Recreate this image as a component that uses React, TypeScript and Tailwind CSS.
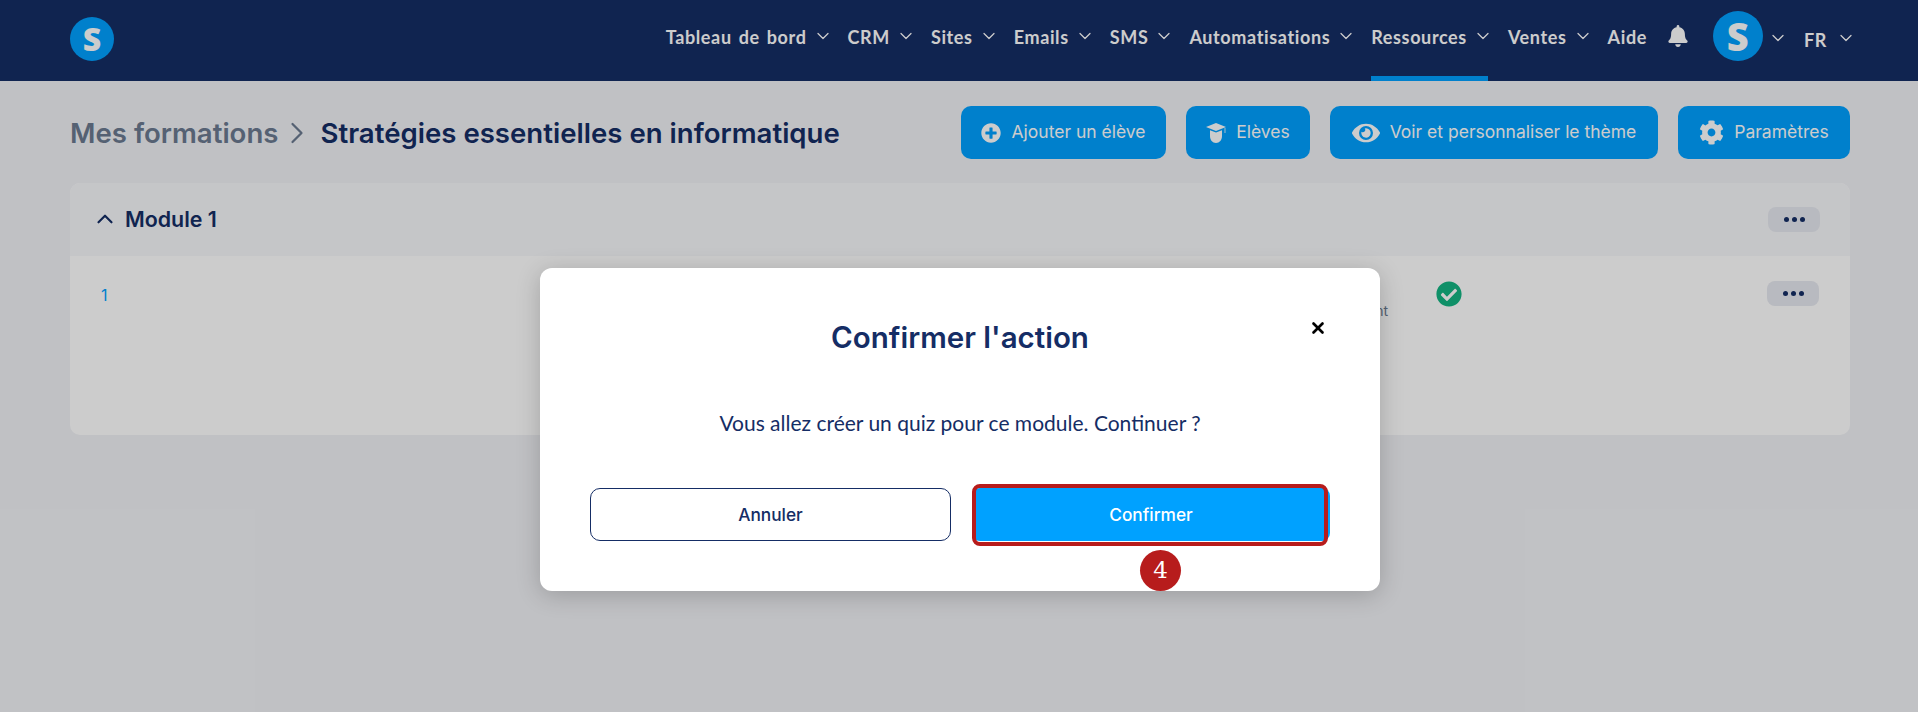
import { ChevronDown, ChevronRight, ChevronUp, X } from "lucide-react";
import { FaBell, FaCheckCircle, FaCog, FaEye, FaPlusCircle } from "react-icons/fa";

const navItems = [
  { label: "Tableau de bord", caret: true },
  { label: "CRM", caret: true },
  { label: "Sites", caret: true },
  { label: "Emails", caret: true },
  { label: "SMS", caret: true },
  { label: "Automatisations", caret: true },
  { label: "Ressources", caret: true, active: true },
  { label: "Ventes", caret: true },
  { label: "Aide", caret: false },
];

const GradCap = () => (
  <svg viewBox="0 0 20 24" className="w-5 h-6" fill="currentColor">
    <path d="M10 2 L20 6 L10 10 L0 6 Z" />
    <path d="M18.6 7 h0.8 v5 h-0.8 z" />
    <path d="M4 9.2 L10 11.6 L16 9.2 V15 C16 19 13.5 22 10 22 C6.5 22 4 19 4 15 Z" />
  </svg>
);

const actions = [
  { label: "Ajouter un élève", icon: <FaPlusCircle className="w-5 h-5" />, width: "w-[205px]" },
  { label: "Elèves", icon: <GradCap />, width: "w-[124px]" },
  { label: "Voir et personnaliser le thème", icon: <FaEye className="w-7 h-7" />, width: "w-[328px]" },
  { label: "Paramètres", icon: <FaCog className="w-[25px] h-[25px]" />, width: "w-[172px]" },
];

const Logo = ({ big }: { big?: boolean }) => (
  <div
    className={`rounded-full bg-[#00a1ff] text-white flex items-center justify-center font-extrabold [font-family:'Open_Sans',sans-serif] ${
      big ? "w-[50px] h-[50px] text-[38px]" : "w-11 h-11 text-[32px]"
    }`}
  >
    S
  </div>
);

const MoreButton = () => (
  <div className="w-[52px] h-[25px] rounded-[8px] bg-[#e7e9f0] flex items-center justify-center gap-[3px]">
    <span className="w-[5px] h-[5px] rounded-full bg-[#152d65]" />
    <span className="w-[5px] h-[5px] rounded-full bg-[#152d65]" />
    <span className="w-[5px] h-[5px] rounded-full bg-[#152d65]" />
  </div>
);

export default function App() {
  return (
    <div className="relative w-full h-[712px] overflow-hidden bg-[#f1f2f6] [font-family:Inter,sans-serif]">
      {/* Top bar */}
      <header className="h-[81px] bg-[#152d65] pl-[70px] pr-[67px] flex items-center justify-between">
        <div className="-mt-[4px]">
          <Logo />
        </div>
        <nav className="flex items-center h-full gap-5 text-white font-bold text-[18px] tracking-[0.035em] [word-spacing:2px] [font-family:Lato,sans-serif]">
          {navItems.map((item) => (
            <div
              key={item.label}
              className={`h-full flex items-center gap-[6px] pb-[2px] border-b-[5px] ${
                item.active ? "border-[#00a1ff]" : "border-transparent"
              }`}
            >
              <span>{item.label}</span>
              {item.caret && <ChevronDown className="w-5 h-5 -mr-[5px] -mt-[3px]" strokeWidth={1.5} />}
            </div>
          ))}
          <FaBell className="w-[22px] h-[22px] -mt-[9px]" />
          <div className="flex items-center -mt-[9px] ml-[4px]">
            <Logo big />
          </div>
          <div className="flex items-center -ml-[15px]">
            <ChevronDown className="w-5 h-5 -mt-[6px]" strokeWidth={1.5} />
            <span className="ml-[16px]">FR</span>
            <ChevronDown className="w-5 h-5 ml-[9px] -mr-[5px] -mt-[6px]" strokeWidth={1.5} />
          </div>
        </nav>
      </header>

      <main className="pl-[70px] pr-[68px]">
        {/* Title and actions */}
        <div className="h-[102px] flex items-center justify-between">
          <div className="flex items-center pt-[3px] text-[27.6px] font-semibold">
            <span className="text-[#6b7a90]">Mes formations</span>
            <ChevronRight className="w-9 h-9 ml-[1px] mr-[5px] text-[#6b7a90]" strokeWidth={1.5} />
            <span className="text-[#152d65]">Stratégies essentielles en informatique</span>
          </div>
          <div className="flex gap-5">
            {actions.map((action) => (
              <button
                key={action.label}
                className={`${action.width} h-[53px] pt-[1px] rounded-[10px] bg-[#00a1ff] text-white text-[17.5px] font-normal flex items-center justify-center gap-[10px]`}
              >
                {action.icon}
                {action.label}
              </button>
            ))}
          </div>
        </div>

        {/* Module card */}
        <section className="rounded-[10px] overflow-hidden bg-white">
          <div className="h-[73px] bg-[#f7f8fb] pl-[22px] pr-[30px] flex items-center justify-between">
            <div className="flex items-center gap-[7px] text-[#152d65] text-[21.4px] font-semibold">
              <ChevronUp className="w-[26px] h-[26px]" strokeWidth={2} />
              Module 1
            </div>
            <MoreButton />
          </div>
          <div className="h-[179px] pl-[31px] pr-[31px] pt-[27px] flex items-start justify-between">
            <span className="text-[#00a1ff] text-[16px] leading-[24px]">1</span>
            <div className="flex items-start -mt-[2px]">
              <span className="mt-[19px] text-[14px] text-[#6b7a90]">Maintenant</span>
              <FaCheckCircle className="ml-[48px] mr-[305px] w-[26px] h-[26px] text-[#13b482]" />
              <MoreButton />
            </div>
          </div>
        </section>
      </main>

      {/* Confirmation dialog */}
      <div className="absolute inset-0 bg-black/20 flex justify-center pt-[268px]">
        <div className="relative ml-[2px] w-[840px] h-[323px] rounded-[12px] bg-white shadow-[0_4px_24px_rgba(0,0,0,0.2)] px-[50px]">
          <h2 className="mt-[48px] h-[42px] text-center text-[#152d65] text-[29.5px] font-semibold leading-[42px]">
            Confirmer l'action
          </h2>
          <X className="absolute top-[51px] right-[53px] w-[18px] h-[18px] text-black" strokeWidth={3.5} />
          <p className="mt-[51px] h-[28px] text-center text-[#152d65] text-[21px] leading-[28px] [font-family:Lato,sans-serif]">
            Vous allez créer un quiz pour ce module. Continuer ?
          </p>
          <div className="mt-[51px] grid grid-cols-[361px_358px] gap-[21px]">
            <button className="h-[53px] rounded-[10px] border border-[#152d65] text-[#152d65] text-[17.3px] font-[450]">
              Annuler
            </button>
            <button className="h-[53px] rounded-[8px] bg-[#00a1ff] text-white text-[17.3px] font-medium">
              Confirmer
            </button>
          </div>
          {/* Tutorial highlight over the confirm button */}
          <div className="absolute left-[432px] top-[216px] w-[356px] h-[62px] rounded-[8px] border-4 border-[#b71c1c]" />
          <div className="absolute left-[600px] top-[282px] w-[41px] h-[41px] rounded-full bg-[#b71c1c] text-white flex items-center justify-center text-[23px] [font-family:'DejaVu_Serif',serif]">
            4
          </div>
        </div>
      </div>
    </div>
  );
}
